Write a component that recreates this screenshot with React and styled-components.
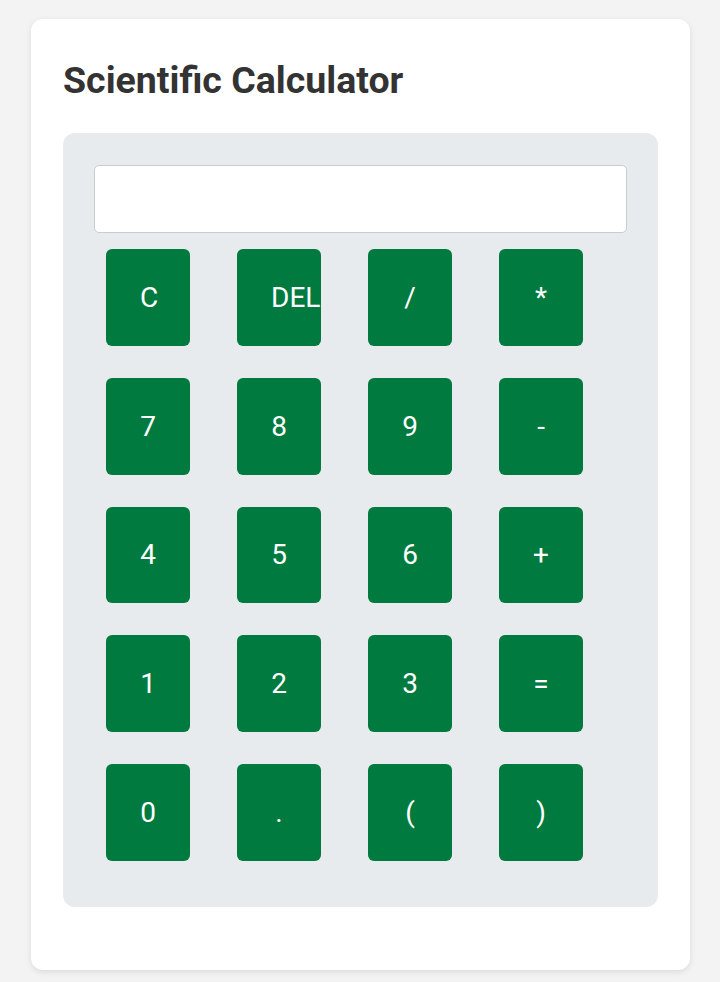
import React from 'react';
import styled, { createGlobalStyle } from 'styled-components';

const GlobalStyle = createGlobalStyle`
  body {
    margin: 0;
    background: #f3f3f3;
    font-family: Roboto, "Liberation Sans", sans-serif;
  }
`;

const Page = styled.div`
  padding: 19px 30px 12px 31px;
`;

const Card = styled.div`
  background: #fff;
  border-radius: 12px;
  box-shadow: 0 2px 6px rgba(0, 0, 0, 0.1);
  padding: 32px 32px 63px 32px;
`;

const Title = styled.h1`
  margin: 7px 0 31px;
  font-size: 37.5px;
  line-height: 44px;
  font-weight: 700;
  color: #333;
`;

const Panel = styled.div`
  background: #e8ebee;
  border-radius: 12px;
  padding: 32px 31px 46px;
`;

const Display = styled.input`
  display: block;
  box-sizing: border-box;
  width: 100%;
  height: 68px;
  margin: 0;
  border: 1px solid #ccc;
  border-radius: 5px;
  background: #fff;
  font-size: 24px;
  text-align: right;
  padding: 0 12px;
`;

const Keys = styled.div`
  display: grid;
  grid-template-columns: repeat(4, 84px);
  grid-auto-rows: 96.75px;
  column-gap: 47px;
  row-gap: 32px;
  padding: 16px 12px 0;
`;

const Key = styled.button`
  border: none;
  border-radius: 6px;
  background: #007a3e;
  color: #fff;
  font-family: Roboto, "Liberation Sans", sans-serif;
  font-size: 28px;
  padding: 0 34px;
  overflow: hidden;
  white-space: nowrap;
  cursor: pointer;
  text-align: center;
`;

const keys = ['C', 'DEL', '/', '*', '7', '8', '9', '-', '4', '5', '6', '+', '1', '2', '3', '=', '0', '.', '(', ')'];

export default function App() {
  return (
    <Page>
      <GlobalStyle />
      <Card>
        <Title>Scientific Calculator</Title>
        <Panel>
          <Display type="text" readOnly />
          <Keys>
            {keys.map((k) => (
              <Key key={k}>{k}</Key>
            ))}
          </Keys>
        </Panel>
      </Card>
    </Page>
  );
}
